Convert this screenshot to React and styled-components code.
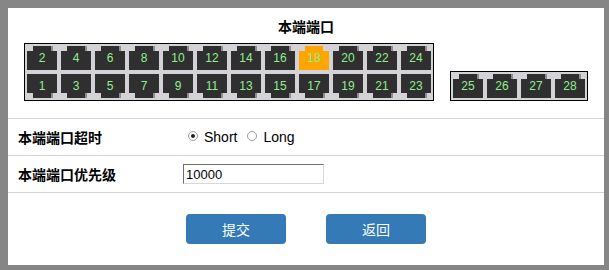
import React, { useState } from 'react';
import styled, { createGlobalStyle } from 'styled-components';

const GlobalStyle = createGlobalStyle`
  html, body {
    margin: 0;
    padding: 0;
    background: #868686;
  }
  body {
    font-family: "Liberation Sans", "Noto Sans CJK SC", Arial, sans-serif;
  }
`;

const Frame = styled.div`
  width: 609px;
  height: 270px;
  box-sizing: border-box;
  padding: 8px 5px 5px 8px;
  background: #868686;
`;

const Panel = styled.div`
  height: 100%;
  background: #fff;
  display: flex;
  flex-direction: column;
`;

const Header = styled.div`
  padding: 10px 0 17px;
  display: flex;
  flex-direction: column;
  align-items: center;
`;

const Title = styled.div`
  font-family: "Noto Sans CJK SC", sans-serif;
  font-size: 14px;
  font-weight: bold;
  line-height: 16px;
  height: 16px;
  color: #000;
`;

const Switch = styled.div`
  margin-top: 9px;
  display: flex;
  align-items: flex-end;
  gap: 16px;
`;

const PortBox = styled.div`
  border: 1px solid #000;
  background: #d4d2d6;
  padding: 2px;
  display: grid;
  grid-template-columns: repeat(${(p) => p.cols}, 30px);
  column-gap: 4px;
  row-gap: 4px;
`;

const Port = styled.div`
  width: 30px;
  height: 24px;
  display: flex;
  flex-direction: ${(p) => (p.down ? 'column-reverse' : 'column')};
  align-items: center;
`;

const Tab = styled.div`
  width: 18px;
  height: 5px;
  background: ${(p) => (p.active ? '#ffa500' : '#2f2f2f')};
  box-shadow: ${(p) => (p.active ? 'none' : '2px 0 0 #8c8c8c')};
`;

const Body = styled.div`
  width: 30px;
  height: 19px;
  box-sizing: border-box;
  padding: ${(p) => (p.down ? '5px 0 0' : '0 0 5px')};
  background: ${(p) => (p.active ? '#ffa500' : '#2f2f2f')};
  color: #90ee90;
  font-family: "Liberation Sans", Arial, sans-serif;
  font-size: 12px;
  display: flex;
  align-items: center;
  justify-content: center;
  cursor: pointer;
`;

const Row = styled.div`
  display: flex;
  align-items: center;
  height: ${(p) => (p.last ? '38px' : '37px')};
  box-sizing: border-box;
  border-top: 1px solid #d3d3d3;
  border-bottom: ${(p) => (p.last ? '1px solid #d3d3d3' : 'none')};
  padding-left: 10px;
`;

const Label = styled.div`
  width: 165px;
  font-family: "Noto Sans CJK SC", sans-serif;
  font-size: 14px;
  font-weight: bold;
  color: #000;
`;

const Value = styled.div`
  display: flex;
  align-items: center;
`;

const RadioItem = styled.label`
  display: flex;
  align-items: center;
  margin-left: ${(p) => (p.first ? '5px' : '10px')};
  font-size: 14px;
  color: #000;
  cursor: pointer;
`;

const Dot = styled.span`
  width: 8px;
  height: 8px;
  border: 1px solid #9a9a9a;
  border-radius: 50%;
  margin: -2px 6px 0 0;
  display: flex;
  align-items: center;
  justify-content: center;
  &::after {
    content: '';
    width: 4px;
    height: 4px;
    border-radius: 50%;
    background: ${(p) => (p.on ? '#222' : 'transparent')};
  }
`;

const Input = styled.input`
  width: 141px;
  height: 20px;
  box-sizing: border-box;
  padding: 0 2px;
  border-style: solid;
  border-width: 1px;
  border-color: #6f6f6f #d8d8d8 #d8d8d8 #6f6f6f;
  font-family: "Liberation Sans", Arial, sans-serif;
  font-size: 13px;
  color: #000;
  outline: none;
`;

const Buttons = styled.div`
  margin-top: 21px;
  display: flex;
  justify-content: center;
  gap: 40px;
`;

const Button = styled.button`
  width: 100px;
  height: 30px;
  border: none;
  border-radius: 4px;
  background: #337ab7;
  color: #fff;
  font-family: "Noto Sans CJK SC", sans-serif;
  font-size: 14px;
  cursor: pointer;
`;

const even = [2, 4, 6, 8, 10, 12, 14, 16, 18, 20, 22, 24];
const odd = [1, 3, 5, 7, 9, 11, 13, 15, 17, 19, 21, 23];
const extra = [25, 26, 27, 28];

function PortItem({ n, down, active, onPick }) {
  return (
    <Port down={down} onClick={() => onPick(n)}>
      <Tab active={active} />
      <Body down={down} active={active}>{n}</Body>
    </Port>
  );
}

export default function App() {
  const [selected, setSelected] = useState(18);
  const [timeout, setTimeoutMode] = useState('short');
  const [priority, setPriority] = useState('10000');

  return (
    <Frame>
      <GlobalStyle />
      <Panel>
        <Header>
          <Title>本端端口</Title>
          <Switch>
            <PortBox cols={12}>
              {even.map((n) => (
                <PortItem key={n} n={n} active={n === selected} onPick={setSelected} />
              ))}
              {odd.map((n) => (
                <PortItem key={n} n={n} down active={n === selected} onPick={setSelected} />
              ))}
            </PortBox>
            <PortBox cols={4}>
              {extra.map((n) => (
                <PortItem key={n} n={n} active={n === selected} onPick={setSelected} />
              ))}
            </PortBox>
          </Switch>
        </Header>
        <Row>
          <Label>本端端口超时</Label>
          <Value>
            <RadioItem first onClick={() => setTimeoutMode('short')}>
              <Dot on={timeout === 'short'} />
              Short
            </RadioItem>
            <RadioItem onClick={() => setTimeoutMode('long')}>
              <Dot on={timeout === 'long'} />
              Long
            </RadioItem>
          </Value>
        </Row>
        <Row last>
          <Label>本端端口优先级</Label>
          <Value>
            <Input value={priority} onChange={(e) => setPriority(e.target.value)} />
          </Value>
        </Row>
        <Buttons>
          <Button>提交</Button>
          <Button>返回</Button>
        </Buttons>
      </Panel>
    </Frame>
  );
}
